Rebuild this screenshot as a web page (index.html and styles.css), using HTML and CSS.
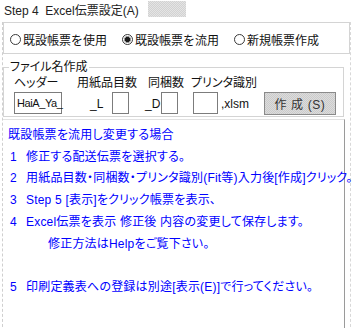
FILE: index.html
```html
<!DOCTYPE html>
<html lang="ja">
<head>
  <meta charset="UTF-8" />
  <meta name="viewport" content="width=device-width, initial-scale=1.0" />
  <title>Excel伝票設定</title>
  <link rel="stylesheet" href="styles.css">
</head>
<body>
  <div class="window">
    <div class="titlebar">
      <span class="title">Step 4  Excel伝票設定(A)</span>
      <span class="status"></span>
    </div>

    <div class="frame">
      <div class="modes">
        <label class="option"><span class="radio"></span>既設帳票を使用</label>
        <label class="option wide"><span class="radio checked"></span>既設帳票を流用</label>
        <label class="option"><span class="radio"></span>新規帳票作成</label>
      </div>

      <fieldset class="filename">
        <legend>ファイル名作成</legend>
        <div class="labels">
          <span class="lbl-head">ヘッダー</span>
          <span class="lbl-paper">用紙品目数</span>
          <span class="lbl-pack">同梱数</span>
          <span>プリンタ識別</span>
        </div>
        <div class="fields">
          <span class="box head">HaiA_Ya_</span>
          <span class="suffix sfx-l">_L</span>
          <span class="box small"></span>
          <span class="suffix sfx-d">_D</span>
          <span class="box small"></span>
          <span class="box printer"></span>
          <span class="suffix ext">,xlsm</span>
          <button id="makeButton">作 成 (S)</button>
        </div>
      </fieldset>

      <div class="notes">
        <div>既設帳票を流用し変更する場合</div>
        <div><span class="num">1</span>修正する配送伝票を選択する。</div>
        <div><span class="num">2</span>用紙品目数・同梱数・プリンタ識別(Fit等)入力後[作成]クリック。</div>
        <div><span class="num">3</span>Step 5 [表示]をクリック帳票を表示、</div>
        <div><span class="num">4</span>Excel伝票を表示 修正後 内容の変更して保存します。</div>
        <div class="indent">修正方法はHelpをご覧下さい。</div>
        <div>&nbsp;</div>
        <div><span class="num">5</span>印刷定義表への登録は別途[表示(E)]で行ってください。</div>
      </div>
    </div>
  </div>
</body>
</html>
```

FILE: styles.css
```css
body {
  margin: 0;
  background: #fff;
  font-family: "Liberation Sans", "Noto Sans CJK JP", sans-serif;
  font-size: 12px;
  font-feature-settings: "palt";
  color: #111;
}

.window {
  width: 352px;
  height: 328px;
  overflow: hidden;
}

.titlebar {
  height: 18px;
  display: flex;
  align-items: center;
  padding-left: 4px;
}

.title {
  white-space: pre;
  color: #222;
}

.status {
  width: 38px;
  height: 16px;
  margin-left: 9px;
  background: repeating-conic-gradient(#e4e4e4 0 25%, #d2d2d2 0 50%) 0 0 / 2px 2px;
}

.frame {
  margin-left: 2px;
  width: 347px;
  height: 310px;
  border-left: 1px dashed #cfcfcf;
  border-right: 1px dashed #d8d8d8;
}

.modes {
  margin-top: 4px;
  width: 339px;
  height: 28px;
  border: 1px solid #d4d4d4;
  display: flex;
  align-items: center;
  padding: 2px 0 0 6px;
  box-sizing: content-box;
}

.option {
  display: flex;
  align-items: center;
  width: 109px;
  color: #111;
  font-feature-settings: normal;
}

.option.wide {
  width: 112px;
}

.option:first-child {
  width: 112px;
}

.radio {
  width: 11px;
  height: 11px;
  border: 1px solid #3a3a3a;
  border-radius: 50%;
  box-sizing: border-box;
  margin-right: 2px;
  background: #fff;
}

.radio.checked {
  background: radial-gradient(circle, #1a1a1a 0 2.3px, #9a9a9a 2.8px 3.3px, #fff 3.8px);
}

.filename {
  margin: 6px 0 0 0;
  padding: 0 0 3px 10px;
  width: 341px;
  height: 57px;
  box-sizing: border-box;
  border: 1px solid #d4d4d4;
}

.filename legend {
  padding: 0 1px;
  margin-left: -5px;
  line-height: 14px;
  color: #111;
}

.labels {
  display: flex;
  height: 14px;
  align-items: center;
}

.lbl-head {
  width: 63px;
}

.lbl-paper {
  width: 71px;
}

.lbl-pack {
  width: 43px;
}

.fields {
  display: flex;
  align-items: center;
  margin-top: 3px;
  height: 24px;
}

.box {
  height: 22px;
  box-sizing: border-box;
  border: 1px solid #7c7c7c;
  background: #fff;
  display: flex;
  align-items: center;
  padding-left: 2px;
  font-size: 11px;
  letter-spacing: -0.4px;
}

.box.head {
  width: 48px;
}

.box.small {
  width: 17px;
}

.box.printer {
  width: 25px;
  margin-left: 15px;
}

.suffix {
  padding-top: 2px;
}

.sfx-l {
  margin-left: 28px;
  width: 22px;
}

.sfx-d {
  margin-left: 16px;
  width: 16px;
}

.ext {
  margin-left: 3px;
  width: 43px;
}

button {
  width: 72px;
  height: 23px;
  padding: 0;
  font-family: inherit;
  font-size: 12px;
  letter-spacing: 0.6px;
  color: #333;
  border: 1px solid #8a8a8a;
  background: repeating-conic-gradient(#dcdcdc 0 25%, #cbcbcb 0 50%) 0 0 / 2px 2px;
}

.notes {
  margin-top: 2px;
  width: 342px;
  height: 220px;
  box-sizing: border-box;
  border-top: 1px solid #e2e2e2;
  border-right: 1px solid #9a9a9a;
  padding: 5px 0 0 5px;
  color: #0000ff;
  line-height: 21.7px;
  letter-spacing: 0.2px;
  white-space: nowrap;
}

.num {
  display: inline-block;
  width: 16px;
  padding-left: 2px;
}

.notes .indent {
  padding-left: 40px;
}
```
